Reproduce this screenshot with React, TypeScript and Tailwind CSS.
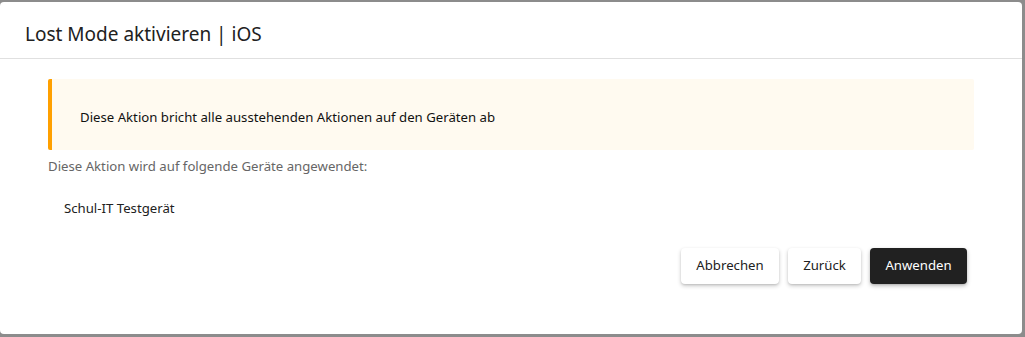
export default function App() {
  return (
    <div
      className="w-full h-[337px] bg-[#8c8c8c] pt-[2px] overflow-hidden"
      style={{ fontFamily: '"Noto Sans", "Open Sans", sans-serif' }}
    >
      <div className="w-[1022px] h-[332px] bg-white rounded-[4px] flex flex-col">
        {/* Header */}
        <div className="h-[57px] px-[25px] flex items-center border-b border-[#e0e0e0]">
          <h2 className="text-[19px] leading-[28px] text-[#212121] pt-[7px]">Lost Mode aktivieren | iOS</h2>
        </div>

        {/* Content */}
        <div className="px-[48px] pt-[20px]">
          <div className="h-[71px] bg-[#fffaf0] border-l-[4px] border-[#ffa000] rounded-[2px] pl-[28px] pt-[28px]">
            <p className="text-[13.2px] leading-[20px] text-[#111]">
              Diese Aktion bricht alle ausstehenden Aktionen auf den Geräten ab
            </p>
          </div>
          <p className="text-[13.2px] leading-[20px] text-[#666] mt-[6px]">
            Diese Aktion wird auf folgende Geräte angewendet:
          </p>
          <p className="text-[13.2px] leading-[20px] text-[#212121] mt-[22px] pl-[16px]">Schul-IT Testgerät</p>
        </div>

        {/* Actions */}
        <div className="flex justify-end gap-[9px] pr-[55px] mt-[30px]">
          <button className="w-[98px] h-[36px] rounded-[4px] bg-white text-[13.2px] text-[#212121] shadow-[0_2px_4px_rgba(0,0,0,0.2),0_1px_2px_rgba(0,0,0,0.1)]">
            Abbrechen
          </button>
          <button className="w-[73px] h-[36px] rounded-[4px] bg-white text-[13.2px] text-[#212121] shadow-[0_2px_4px_rgba(0,0,0,0.2),0_1px_2px_rgba(0,0,0,0.1)]">
            Zurück
          </button>
          <button className="w-[97px] h-[36px] rounded-[4px] bg-[#212121] text-[13.2px] text-white shadow-[0_2px_4px_rgba(0,0,0,0.25),0_1px_2px_rgba(0,0,0,0.1)]">
            Anwenden
          </button>
        </div>
      </div>
    </div>
  )
}
